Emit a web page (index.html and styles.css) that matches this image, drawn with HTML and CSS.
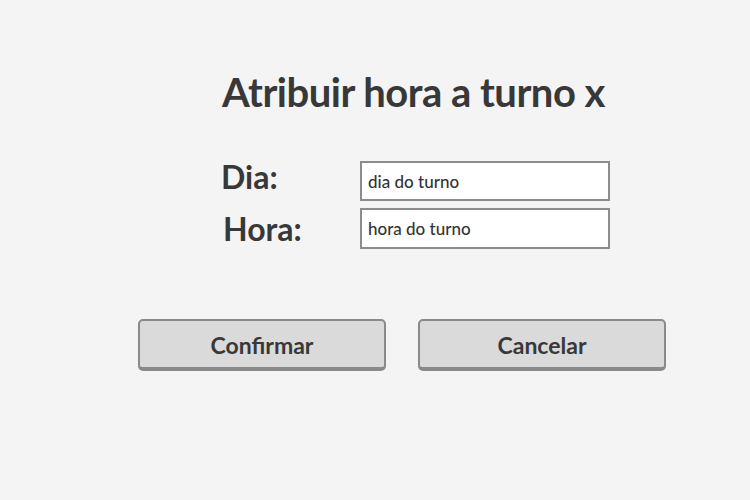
FILE: index.html
```html
<!DOCTYPE html>
<html>
<head>
<meta charset="utf-8">
<link rel="stylesheet" href="styles.css">
</head>
<body>
<div class="page">
  <h1 class="title">Atribuir hora a turno x</h1>
  <div class="form">
    <div class="row row-dia">
      <label class="label">Dia:</label>
      <div class="input">dia do turno</div>
    </div>
    <div class="row row-hora">
      <label class="label label-hora">Hora:</label>
      <div class="input">hora do turno</div>
    </div>
  </div>
  <div class="actions">
    <button class="btn">Confirmar</button>
    <button class="btn">Cancelar</button>
  </div>
</div>
</body>
</html>
```
FILE: styles.css
```css
html, body {
  margin: 0;
  padding: 0;
  background: #f4f4f4;
  width: 750px;
  height: 500px;
  overflow: hidden;
}
.page {
  font-family: Lato, "Open Sans", sans-serif;
  color: #383838;
  display: flex;
  flex-direction: column;
  padding-top: 68px;
}
.title {
  margin: 0 0 0 222px;
  font-size: 40px;
  font-weight: 700;
  line-height: 48px;
  letter-spacing: -0.5px;
}
.form {
  margin-top: 45px;
  display: flex;
  flex-direction: column;
  gap: 7px;
}
.row {
  display: flex;
  align-items: center;
}
.label {
  width: 139px;
  margin-left: 221px;
  font-size: 32px;
  font-weight: 700;
}
.row-dia .label {
  margin-top: -10px;
}
.label-hora {
  margin-left: 223px;
  width: 137px;
}
.input {
  box-sizing: border-box;
  width: 250px;
  height: 40px;
  border: 2px solid #8c8c8c;
  background: #fff;
  padding-left: 6px;
  display: flex;
  align-items: center;
  font-size: 17px;
  font-weight: 500;
  color: #333;
}
.row-hora .input {
  height: 41px;
}
.actions {
  margin-top: 70px;
  margin-left: 138px;
  display: flex;
  gap: 32px;
}
.btn {
  box-sizing: border-box;
  width: 248px;
  height: 52px;
  border: 2px solid #8a8a8a;
  border-bottom-width: 4px;
  border-radius: 5px;
  background: #dadada;
  font-family: Lato, "Open Sans", sans-serif;
  font-size: 23px;
  font-weight: 700;
  color: #383838;
  padding: 2px 0 0;
}
```
